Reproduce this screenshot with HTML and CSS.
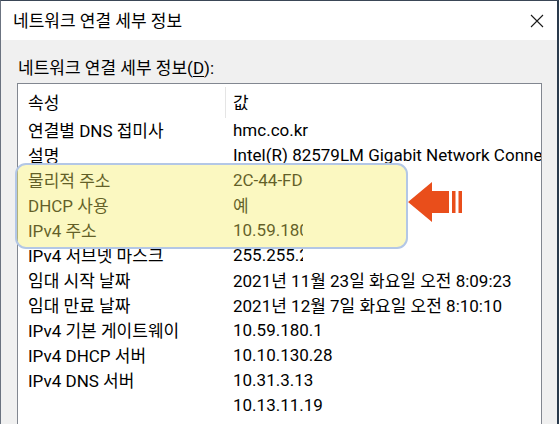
FILE: index.html
```html
<!DOCTYPE html>
<html lang="ko">
<head>
<meta charset="utf-8">
<link rel="stylesheet" href="styles.css">
</head>
<body>
<div class="window">
  <div class="titlebar">
    <span class="title">네트워크 연결 세부 정보</span>
    <svg class="close" width="14" height="14" viewBox="0 0 14 14"><path d="M1 1 L13 13 M13 1 L1 13" stroke="#1a1a1a" stroke-width="1.1" fill="none"/></svg>
  </div>
  <div class="content">
    <div class="label">네트워크 연결 세부 정보(<u>D</u>):</div>
    <div class="listbox">
      <div class="row head"><div class="c1 sep">속성</div><div class="c2">값</div></div>
      <div class="row"><div class="c1">연결별 DNS 접미사</div><div class="c2">hmc.co.kr</div></div>
      <div class="row"><div class="c1">설명</div><div class="c2">Intel(R) 82579LM Gigabit Network Connection</div></div>
      <div class="row"><div class="c1">물리적 주소</div><div class="c2"><span class="mask">2C-44-FD-00-00-00</span></div></div>
      <div class="row"><div class="c1">DHCP 사용</div><div class="c2">예</div></div>
      <div class="row"><div class="c1">IPv4 주소</div><div class="c2"><span class="mask">10.59.180.00</span></div></div>
      <div class="row"><div class="c1">IPv4 서브넷 마스크</div><div class="c2"><span class="mask">255.255.255.0</span></div></div>
      <div class="row"><div class="c1">임대 시작 날짜</div><div class="c2">2021년 11월 23일 화요일 오전 8:09:23</div></div>
      <div class="row"><div class="c1">임대 만료 날짜</div><div class="c2">2021년 12월 7일 화요일 오전 8:10:10</div></div>
      <div class="row"><div class="c1">IPv4 기본 게이트웨이</div><div class="c2">10.59.180.1</div></div>
      <div class="row"><div class="c1">IPv4 DHCP 서버</div><div class="c2">10.10.130.28</div></div>
      <div class="row"><div class="c1">IPv4 DNS 서버</div><div class="c2">10.31.3.13</div></div>
      <div class="row"><div class="c1"></div><div class="c2">10.13.11.19</div></div>
    </div>
  </div>
  <div class="highlight"></div>
  <svg class="arrow" width="60" height="44" viewBox="0 0 60 44">
    <path d="M0 20 L24 0 L24 9 L41 9 L41 31 L24 31 L24 40 Z" fill="#e94e1b"/>
    <rect x="44" y="9" width="3.5" height="22" fill="#e94e1b"/>
    <rect x="50.5" y="9" width="3.5" height="22" fill="#e94e1b"/>
  </svg>
</div>
</body>
</html>
```

FILE: styles.css
```css
* { box-sizing: border-box; }
html, body { margin: 0; padding: 0; background: #ffffff; }
body {
  font-family: "Roboto", "Noto Sans CJK KR", sans-serif;
  font-size: 17px;
  color: #000;
}
.window {
  position: relative;
  width: 559px;
  height: 424px;
  overflow: hidden;
  border-left: 1px solid #6b7380;
  border-top: 1px solid #3a4656;
  border-right: 2px solid #2a3a4c;
  background: #f0f0f0;
  display: flex;
  flex-direction: column;
}
.titlebar {
  height: 39px;
  background: #ffffff;
  display: flex;
  align-items: center;
  justify-content: space-between;
  padding: 0 13px 0 12px;
  flex: none;
}
.title { line-height: 20px; }
.close { display: block; }
.content {
  padding: 18px 0 0 16px;
  display: flex;
  flex-direction: column;
  flex: 1;
}
.label { line-height: 20px; padding-left: 1px; }
.label u { text-decoration-thickness: 1px; text-underline-offset: 2px; }
.listbox {
  margin-top: 5px;
  width: 525px;
  flex: 1;
  background: #fff;
  border: 1px solid #828790;
  border-bottom: none;
  overflow: hidden;
}
.row {
  display: grid;
  grid-template-columns: 208px 1fr;
  height: 25px;
  align-items: center;
  white-space: nowrap;
}
.row.head { height: 34px; margin-bottom: -1px; }
.c1 { padding-left: 10px; height: 100%; display: flex; align-items: center; }
.c2 { padding-left: 7px; overflow: hidden; height: 100%; display: flex; align-items: center; }
.sep { position: relative; }
.sep::after {
  content: "";
  position: absolute;
  right: 0;
  top: 3px;
  bottom: 0;
  width: 1px;
  background: #e5e5e5;
}
.mask {
  display: inline-block;
  width: 70px;
  overflow: hidden;
  white-space: nowrap;
}
.highlight {
  position: absolute;
  left: 14px;
  top: 162px;
  width: 393px;
  height: 86px;
  border: 2px solid #b3c7e6;
  border-radius: 11px;
  background: rgba(245, 238, 100, 0.4);
}
.arrow {
  position: absolute;
  left: 407px;
  top: 181px;
}
```
